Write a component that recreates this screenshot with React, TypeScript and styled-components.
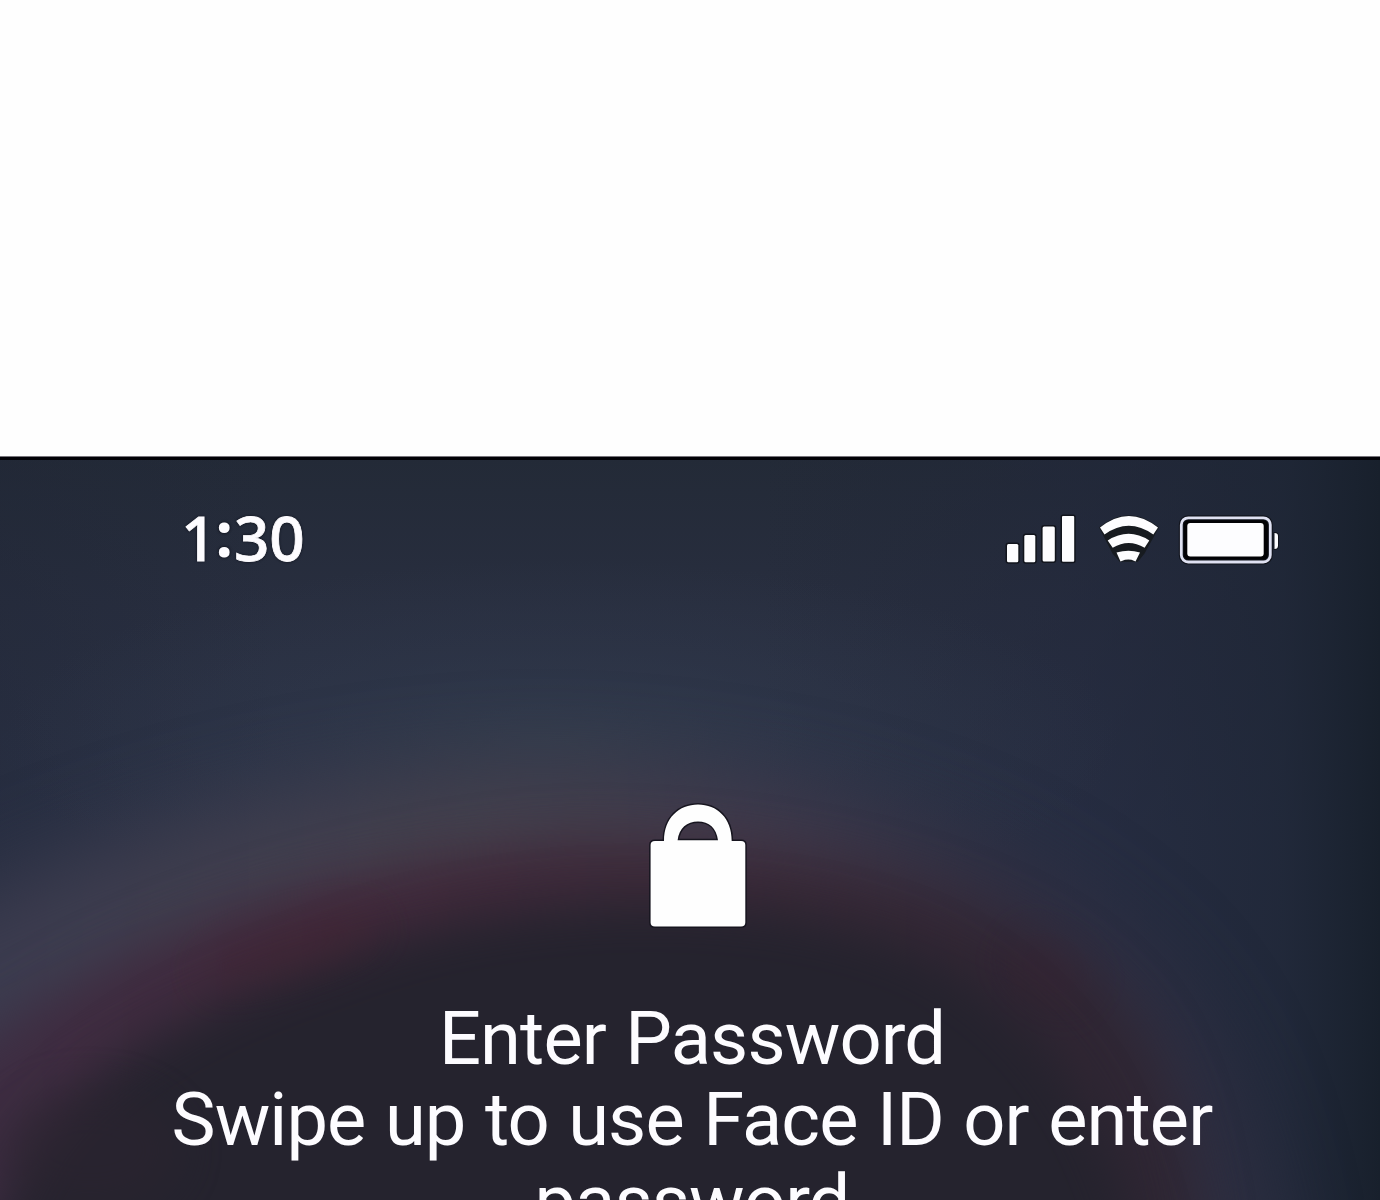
import React from 'react';
import styled, { createGlobalStyle } from 'styled-components';

const GlobalStyle = createGlobalStyle`
  * {
    box-sizing: border-box;
  }

  body {
    margin: 0;
    background-color: #fefefe;
  }
`;

const PageStyled = styled.main`
  width: 100%;
  height: 1200px;
  padding-top: 456px;
  overflow: hidden;
  background-color: #fefefe;
`;

const ScreenStyled = styled.section`
  position: relative;
  height: 744px;
  overflow: hidden;
  border-top: 1px solid #77747b;
  background-color: #232937;
  color: #fdfcff;

  .wallpaper {
    position: absolute;
    left: 0;
    top: 0;
  }
`;

// Blurred photo behind the lock screen: night sky over a dark dome with a red rim
const Wallpaper = () => {
  return (
    <svg className='wallpaper' width='1380' height='743' viewBox='0 457 1380 743'>
      <defs>
        <linearGradient id='sky' x1='0' y1='0' x2='0' y2='1'>
          <stop offset='0' stopColor='#232a37' />
          <stop offset='0.2' stopColor='#282e3f' />
          <stop offset='0.5' stopColor='#2c3348' />
          <stop offset='1' stopColor='#2f3348' />
        </linearGradient>
        <linearGradient id='side' x1='0' y1='0' x2='1' y2='0'>
          <stop offset='0' stopColor='#1f2535' stopOpacity='0.35' />
          <stop offset='0.2' stopColor='#1f2535' stopOpacity='0' />
          <stop offset='0.55' stopColor='#1f2535' stopOpacity='0' />
          <stop offset='0.78' stopColor='#20263a' stopOpacity='0.45' />
          <stop offset='0.93' stopColor='#1d2535' stopOpacity='0.75' />
          <stop offset='1' stopColor='#18202c' stopOpacity='1' />
        </linearGradient>
        <radialGradient id='glow'>
          <stop offset='0' stopColor='#343f4f' stopOpacity='0.7' />
          <stop offset='0.5' stopColor='#333d50' stopOpacity='0.3' />
          <stop offset='1' stopColor='#333d50' stopOpacity='0' />
        </radialGradient>
        <linearGradient id='haze' x1='0' y1='0' x2='1380' y2='0' gradientUnits='userSpaceOnUse'>
          <stop offset='0' stopColor='#3c3c4f' />
          <stop offset='0.36' stopColor='#45414d' />
          <stop offset='0.55' stopColor='#423a4b' />
          <stop offset='0.72' stopColor='#332f41' />
          <stop offset='1' stopColor='#2b2e41' />
        </linearGradient>
        <linearGradient id='rim' x1='0' y1='0' x2='1380' y2='0' gradientUnits='userSpaceOnUse'>
          <stop offset='0' stopColor='#3e2d42' />
          <stop offset='0.25' stopColor='#41293b' />
          <stop offset='0.5' stopColor='#3c2a39' />
          <stop offset='0.75' stopColor='#302633' />
          <stop offset='1' stopColor='#2d2734' />
        </linearGradient>
        <filter id='blurHaze' x='-20%' y='-30%' width='140%' height='160%' colorInterpolationFilters='sRGB'>
          <feGaussianBlur stdDeviation='42' />
        </filter>
        <filter id='blurRim' x='-20%' y='-30%' width='140%' height='160%' colorInterpolationFilters='sRGB'>
          <feGaussianBlur stdDeviation='25' />
        </filter>
        <filter id='blurSpot' x='-100%' y='-200%' width='300%' height='500%' colorInterpolationFilters='sRGB'>
          <feGaussianBlur stdDeviation='20' />
        </filter>
      </defs>
      <rect y='457' width='1380' height='743' fill='url(#sky)' />
      <rect y='457' width='1380' height='743' fill='url(#side)' />
      <ellipse cx='560' cy='740' rx='560' ry='180' fill='url(#glow)' />
      <path
        d='M-160 1300 L-160 970 C20 870 240 775 540 768 C840 775 1010 855 1100 930 C1200 1000 1255 1120 1280 1300 Z'
        fill='url(#haze)'
        filter='url(#blurHaze)'
      />
      <path
        d='M-120 1350 L-120 1120 C60 965 250 876 560 842 C820 838 990 898 1080 968 C1165 1030 1200 1130 1210 1350 Z'
        fill='url(#rim)'
        filter='url(#blurRim)'
      />
      <path
        d='M-20 1350 C-20 1130 120 1030 330 960 C500 890 760 880 920 950 C1030 1005 1130 1110 1160 1350 Z'
        fill='#25232e'
        filter='url(#blurRim)'
      />
      <ellipse cx='290' cy='950' rx='90' ry='18' transform='rotate(-17 290 950)' fill='#42222d' opacity='0.4' filter='url(#blurSpot)' />
      <ellipse cx='1050' cy='970' rx='40' ry='22' transform='rotate(35 1050 970)' fill='#3a2030' opacity='0.4' filter='url(#blurSpot)' />
      <ellipse cx='90' cy='1150' rx='90' ry='60' fill='#2c2430' opacity='0.5' filter='url(#blurSpot)' />
      <rect y='457' width='1380' height='3' fill='#020107' />
    </svg>
  );
};

const StatusBarStyled = styled.header`
  position: relative;
  display: flex;
  justify-content: space-between;
  align-items: flex-start;
  height: 343px;
  padding: 55px 98px 0 181px;

  .icons {
    display: block;
    overflow: visible;
  }
`;

const ClockStyled = styled.time`
  display: flex;
  margin-top: -10px;
  font: 500 62px/70px 'Noto Sans', 'Open Sans', sans-serif;
  text-shadow: 0 0 3px #10131d, 0 0 2px #10131d;
  -webkit-text-stroke: 0.8px #fdfcff;

  .colon {
    margin: -4px 1px 0 -1px;
    font-weight: 700;
    -webkit-text-stroke: 0;
  }
`;

const StatusIcons = () => {
  return (
    <svg className='icons' width='282' height='56' viewBox='1000 512 282 56' fill='#fdfdff'>
      <g stroke='#11141c' strokeWidth='3' strokeLinejoin='round' paintOrder='stroke'>
        <rect x='1007' y='544' width='11.3' height='18.3' rx='1.5' />
        <rect x='1024.3' y='535' width='11' height='27.3' rx='1.5' />
        <rect x='1042.6' y='526.4' width='12.2' height='35' rx='1.5' />
        <rect x='1062' y='516' width='12.2' height='45.7' rx='1' />
      </g>
      <path
        d='M1100 527.6 Q1128.7 504.4 1158 527.6 L1144 553 L1137.5 561 H1120 L1113 553 Z'
        fill='#171b20'
        stroke='#171b20'
        strokeWidth='1.5'
        strokeLinejoin='round'
      />
      <path d='M1100 527.6 Q1128.7 504.4 1158 527.6 L1153.3 534.5 Q1128.7 517 1104.5 534.5 Z' />
      <path d='M1107.7 540.4 Q1128.7 527 1149.3 540.4 L1144.6 547.8 Q1128.7 538.4 1112.7 547.8 Z' />
      <path d='M1116.5 552.6 Q1128.7 548.8 1140 552.6 L1135.5 561.5 L1131.5 559.8 Q1128.5 559.4 1125 559.8 L1120.5 561.5 Z' />
      <rect x='1181.3' y='517.8' width='89' height='44.2' rx='7' fill='#020205' stroke='#11141c' strokeWidth='5' />
      <rect x='1181.3' y='517.8' width='89' height='44.2' rx='7' fill='none' stroke='#dfe1f2' strokeWidth='2.8' />
      <rect x='1187.3' y='523' width='76.4' height='33.5' rx='3' />
      <path d='M1274.5 533 Q1278 533 1278 536 V545.5 Q1278 549 1274.5 549 Z' stroke='#11141c' strokeWidth='2' paintOrder='stroke' />
    </svg>
  );
};

const PromptStyled = styled.div`
  position: relative;
  display: flex;
  flex-direction: column;
  align-items: center;
  width: 1384px;

  .lock {
    display: block;
    margin-left: 12px;
  }
`;

const LockIcon = () => {
  return (
    <svg className='lock' width='104' height='134' viewBox='646 800 104 134'>
      <path
        d='M664 841 C664 818 679 804.5 698 804.5 C717 804.5 731.7 818 731.7 841 H741 Q745.3 841 745.3 845 V922.5 Q745.3 926.6 741 926.6 H655 Q650.6 926.6 650.6 922.5 V845 Q650.6 841 655 841 Z
          M677.6 840.3 C679 828 687 821.5 698 821.5 C709 821.5 716.5 828 718 840.3 Z'
        fill='#fefefe'
        fillRule='evenodd'
        stroke='#17151f'
        strokeWidth='3'
        strokeLinejoin='round'
        paintOrder='stroke'
      />
    </svg>
  );
};

const MessageStyled = styled.p`
  width: 1100px;
  margin: 64px 0 0;
  font: 400 74px/81.3px Roboto, sans-serif;
  letter-spacing: -0.9px;
  word-spacing: 2px;
  text-align: center;
`;

const App = () => {
  return (
    <>
      <GlobalStyle />
      <PageStyled>
        <ScreenStyled>
          <Wallpaper />
          <StatusBarStyled>
            <ClockStyled>
              <span>1</span>
              <span className='colon'>:</span>
              <span>30</span>
            </ClockStyled>
            <StatusIcons />
          </StatusBarStyled>
          <PromptStyled>
            <LockIcon />
            <MessageStyled>
              Enter Password
              <br />
              Swipe up to use Face ID or enter password
            </MessageStyled>
          </PromptStyled>
        </ScreenStyled>
      </PageStyled>
    </>
  );
};

export default App;
